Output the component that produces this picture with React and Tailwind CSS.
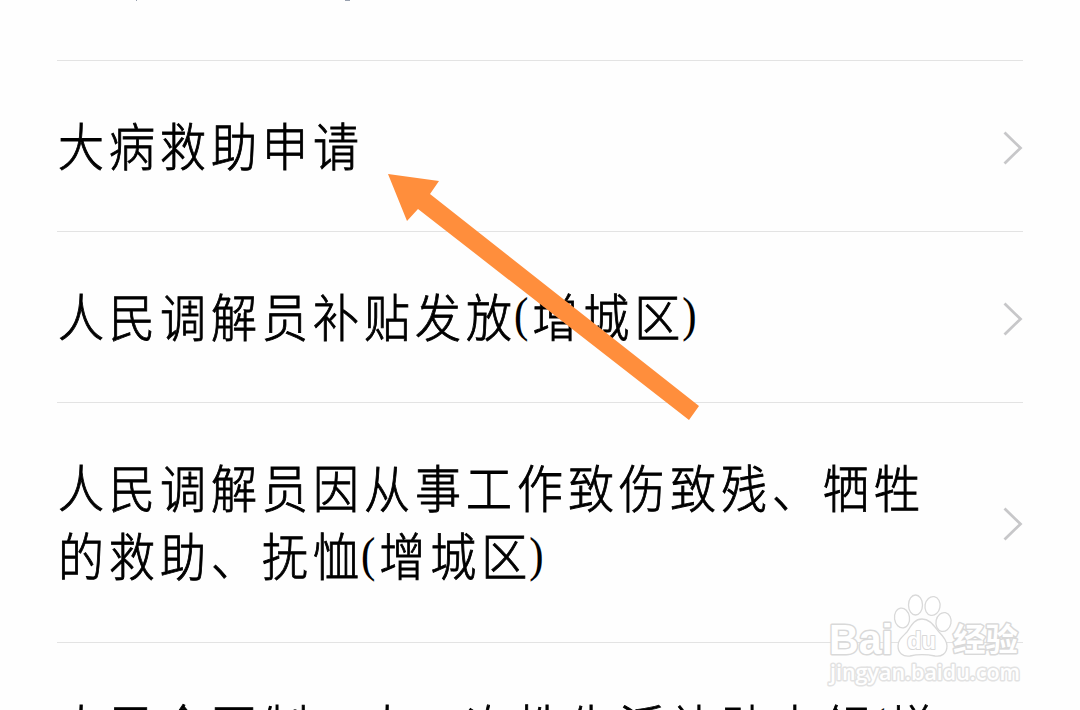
import React from 'react';

const services = [
  { lines: ['大病救助申请'], height: 'h-[171px]' },
  { lines: ['人民调解员补贴发放(增城区)'], height: 'h-[171px]' },
  { lines: ['人民调解员因从事工作致伤致残、牺牲', '的救助、抚恤(增城区)'], height: 'h-[240px]' },
  { lines: ['人民全国制工大一次性生活补贴申领(增'], height: 'h-[171px]', noArrow: true },
];

const Chevron = () => (
  <svg width="20" height="34" viewBox="0 0 20 34" fill="none" className="mt-[3px] shrink-0">
    <path d="M1.5 1.5 L17.5 17 L1.5 32.5" stroke="#c7c7c9" strokeWidth="2.8" />
  </svg>
);

// brackets are set lighter and tighter than the characters around them
const Line = ({ text }) => (
  <p>
    {text.split(/([()])/).map((part, i) =>
      part === '(' || part === ')' ? (
        <span key={i} className="-ml-[3px] align-[5px] text-[43px] leading-none tracking-[4px] [-webkit-text-stroke:0.1px_#000]">{part}</span>
      ) : (
        part
      )
    )}
  </p>
);

const ServiceRow = ({ lines, height, noArrow }) => (
  <div className={`${height} flex shrink-0 items-center justify-between border-b border-[#e3e3e3]`}>
    <div className="origin-center scale-y-[1.11] pt-[5px] pl-px text-[46px] font-light leading-[62px] tracking-[5px] whitespace-nowrap text-black [-webkit-text-stroke:0.8px_#000]">
      {lines.map((line) => (
        <Line key={line} text={line} />
      ))}
    </div>
    {!noArrow && <Chevron />}
  </div>
);

const PointerArrow = () => (
  <svg className="absolute left-[380px] top-[165px]" width="330" height="265" viewBox="380 165 330 265">
    <polygon points="388,174 439,181 430,194 699,406 689,420 418,209 407,221" fill="#ff8e3c" />
  </svg>
);

const Watermark = () => (
  <svg className="absolute left-[820px] top-[585px]" width="210" height="110" viewBox="0 0 210 110">
    <g fill="#fff" stroke="#d9d9d9" strokeWidth="1.3">
      <ellipse cx="95.5" cy="20" rx="7" ry="10" />
      <ellipse cx="112.5" cy="21" rx="7.5" ry="9.5" transform="rotate(10 112.5 21)" />
      <ellipse cx="82" cy="33" rx="7.5" ry="10" transform="rotate(-8 82 33)" />
      <ellipse cx="123.5" cy="37" rx="7.5" ry="9.5" transform="rotate(12 123.5 37)" />
      <path d="M102 34c8 0 12 7 17 13 5 5 8 9 8 14 0 8-6 11-12 10-9-2-17-2-25 0-7 1-12-3-12-10 0-6 4-9 9-14 4-6 7-13 15-13z" />
    </g>
    <g fill="#fff" stroke="#d9d9d9" strokeWidth="3" strokeLinejoin="round" paintOrder="stroke" fontFamily="'Liberation Sans', 'Noto Sans CJK SC', sans-serif" fontWeight="700">
      <text x="9" y="69" fontSize="43" textLength="64" lengthAdjust="spacingAndGlyphs">Bai</text>
      <text x="87" y="64" fontSize="24" strokeWidth="2" textLength="29" lengthAdjust="spacingAndGlyphs">du</text>
      <text x="133" y="66" fontSize="32" textLength="65" lengthAdjust="spacingAndGlyphs">经验</text>
      <text x="10" y="95" fontSize="22" fontWeight="600" stroke="#e2e2e2" fontFamily="'Open Sans', sans-serif" textLength="190" lengthAdjust="spacingAndGlyphs">jingyan.baidu.com</text>
    </g>
  </svg>
);

const App = () => (
  <div className="relative h-[710px] w-[1080px] overflow-hidden bg-[#fefefe] font-['Liberation_Serif','Noto_Sans_CJK_SC',sans-serif] antialiased">
    <div className="flex flex-col pl-[57px] pr-[57px]">
      {/* tail of the row scrolled off the top */}
      <div className="flex h-[61px] shrink-0 items-start border-b border-[#e3e3e3]">
        <span className="ml-[79px] h-px w-px bg-gray-400" />
        <span className="ml-[208px] h-px w-[5px] bg-gray-400" />
      </div>
      {services.map((item) => (
        <ServiceRow key={item.lines[0]} {...item} />
      ))}
    </div>
    <PointerArrow />
    <Watermark />
  </div>
);

export default App;
